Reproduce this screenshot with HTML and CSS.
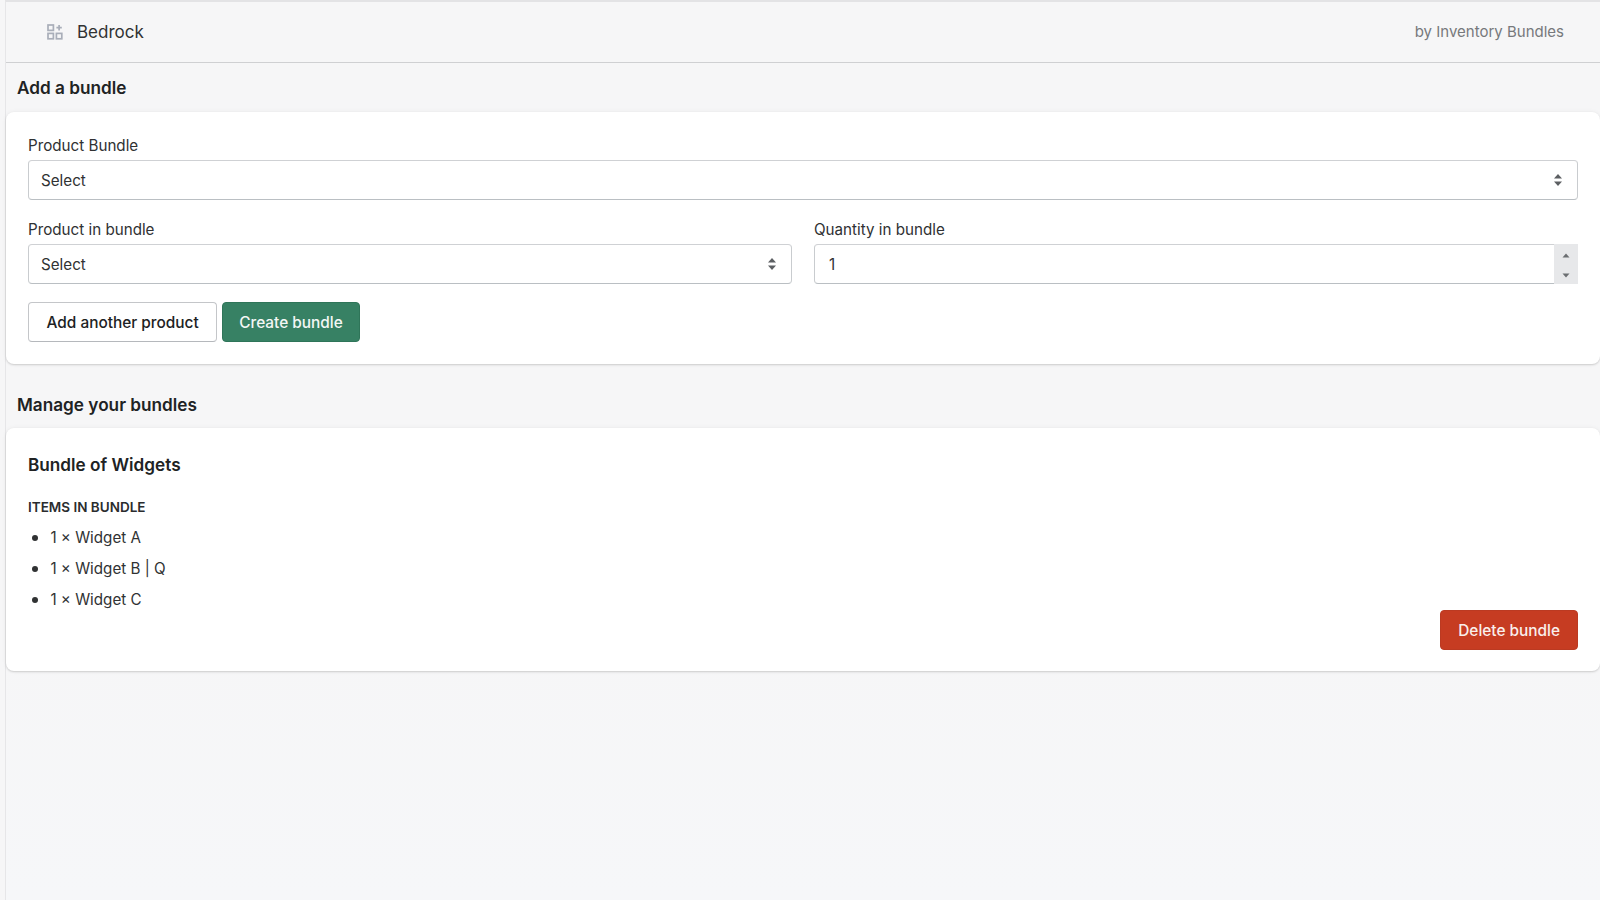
FILE: index.html
```html
<!DOCTYPE html>
<html lang="en">
<head>
<meta charset="utf-8">
<title>Bedrock</title>
<link rel="stylesheet" href="styles.css">
</head>
<body>
<div class="app">
  <header class="topbar">
    <div class="brand">
      <svg class="brand-icon" width="16" height="16" viewBox="0 0 16 16" fill="none" stroke="#a9aeb9" stroke-width="1.7">
        <rect x="1" y="1" width="5.4" height="5.4"/>
        <rect x="1" y="9.4" width="5.4" height="5.4"/>
        <rect x="9.4" y="9.4" width="5.4" height="5.4"/>
        <path d="M12.1 1v5.4M9.4 3.7h5.4"/>
      </svg>
      <span class="brand-name">Bedrock</span>
    </div>
    <span class="byline">by Inventory Bundles</span>
  </header>

  <h2 class="section-title first">Add a bundle</h2>
  <section class="card form-card">
    <div class="field">
      <label class="label">Product Bundle</label>
      <div class="select-wrap">
        <select class="control"><option>Select</option></select>
        <svg class="updown" width="10" height="14" viewBox="0 0 10 14"><path d="M5 1l4 4.6H1z"/><path d="M5 13L1 8.4h8z"/></svg>
      </div>
    </div>
    <div class="field-row">
      <div class="field">
        <label class="label">Product in bundle</label>
        <div class="select-wrap">
          <select class="control"><option>Select</option></select>
          <svg class="updown" width="10" height="14" viewBox="0 0 10 14"><path d="M5 1l4 4.6H1z"/><path d="M5 13L1 8.4h8z"/></svg>
        </div>
      </div>
      <div class="field">
        <label class="label">Quantity in bundle</label>
        <div class="number-wrap">
          <input class="control number" type="text" value="1">
          <div class="spinner">
            <svg width="8" height="5" viewBox="0 0 8 5"><path d="M4 .5l3.5 4h-7z"/></svg>
            <svg width="8" height="5" viewBox="0 0 8 5"><path d="M4 4.5L.5.5h7z"/></svg>
          </div>
        </div>
      </div>
    </div>
    <div class="actions">
      <button class="btn btn-default">Add another product</button>
      <button class="btn btn-primary">Create bundle</button>
    </div>
  </section>

  <h2 class="section-title second">Manage your bundles</h2>
  <section class="card bundle-card">
    <h3 class="bundle-title">Bundle of Widgets</h3>
    <h4 class="items-heading">ITEMS IN BUNDLE</h4>
    <ul class="items">
      <li>1 × Widget A</li>
      <li>1 × Widget B | Q</li>
      <li>1 × Widget C</li>
    </ul>
    <div class="bundle-actions">
      <button class="btn btn-danger">Delete bundle</button>
    </div>
  </section>
</div>
</body>
</html>
```

FILE: styles.css
```css
* { box-sizing: border-box; }
html, body { margin: 0; height: 100%; }
body {
  background: #f6f6f7;
  font-family: Inter, "Liberation Sans", sans-serif;
  color: #202223;
  font-size: 15.2px;
  overflow: hidden;
}
.app {
  min-height: 900px;
  margin-left: 5px;
  border-left: 1px solid #e6e6e8;
  border-top: 2px solid #e3e3e5;
  background: linear-gradient(#f6f6f7 70%, #f6f7f9);
}
.topbar {
  height: 61px;
  border-bottom: 1px solid #cfd0d2;
  display: flex;
  align-items: center;
  justify-content: space-between;
  padding: 0 36px 1px 41px;
}
.brand { display: flex; align-items: center; gap: 14px; }
.brand-icon { display: block; }
.brand-name { font-size: 17px; color: #303233; }
.byline { font-size: 15px; color: #77797c; }
.section-title { margin: 0; font-size: 17.2px; font-weight: 600; line-height: 24px; padding-left: 11px; color: #202223; }
.section-title.first { padding-top: 13px; padding-bottom: 12px; }
.section-title.second { padding-top: 29px; padding-bottom: 11px; }
.card {
  background: #fff;
  border-radius: 8px;
  box-shadow: 0 0 5px rgba(23, 24, 24, .05), 0 1px 2px rgba(0, 0, 0, .15);
}
.form-card { height: 252px; padding: 22px 22px 22px; }
.field { flex: 1 1 0; min-width: 0; }
.field + .field-row { margin-top: 18px; }
.field-row { display: flex; gap: 22px; }
.label { display: block; font-size: 15.2px; line-height: 24px; color: #2f3133; margin-bottom: 2px; }
.select-wrap, .number-wrap { position: relative; display: flex; }
.control {
  appearance: none;
  -webkit-appearance: none;
  width: 100%;
  height: 40px;
  background: #fff;
  border: 1px solid #c9cccf;
  border-top-color: #cfd1d4;
  border-bottom-color: #babfc3;
  border-radius: 4px;
  padding: 0 12px;
  font: inherit;
  color: #303233;
  outline: none;
}
.number { border-radius: 4px 0 0 4px; border-right: 0; padding-left: 14px; }
.updown {
  position: absolute;
  right: 15px;
  top: 13px;
  fill: #5c5f62;
  pointer-events: none;
}
.spinner {
  flex: 0 0 24px;
  height: 40px;
  background: #e7e8ea;
  display: flex;
  flex-direction: column;
  align-items: center;
  justify-content: space-between;
  padding: 9px 0 6px;
  fill: #6b6e71;
}
.spinner svg { display: block; }
.actions { display: flex; gap: 5px; margin-top: 18px; }
.btn {
  height: 40px;
  border-radius: 4px;
  font: 500 15.4px Inter, "Liberation Sans", sans-serif;
  padding: 0 18px;
}
.btn-default { background: #fff; border: 1px solid #c4c6c9; border-bottom-color: #b5b8bc; color: #202223; padding: 0 17.5px; }
.btn-primary { background: #378164; border: 1px solid #2f7559; color: #f3f7f5; padding: 0 16px; }
.btn-danger { background: #c63c22; border: 1px solid #bb3a22; color: #f9efec; padding: 0 17px; }
.bundle-card { height: 243px; padding: 25px 22px 0; }
.bundle-title { margin: 0; font-size: 17.2px; font-weight: 600; line-height: 24px; }
.items-heading { margin: 20px 0 0; font-size: 13.5px; font-weight: 600; line-height: 20px; color: #2a2c2e; }
.items { margin: 4px 0 0; padding: 0 0 0 22px; color: #303233; }
.items li { line-height: 31px; height: 31px; padding-left: .4px; }
.items li::marker { font-size: 18px; }
.bundle-actions { display: flex; justify-content: flex-end; margin-top: -4px; }
```
